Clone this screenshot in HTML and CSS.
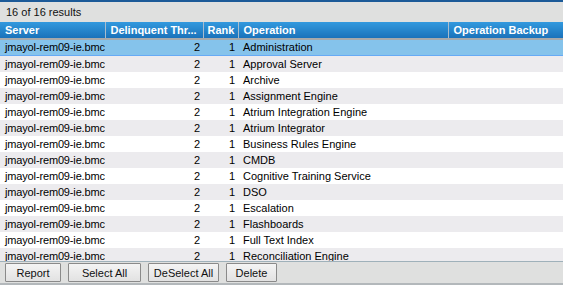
FILE: index.html
```
<!DOCTYPE html>
<html lang="en">
  <head>
    <meta charset="utf-8">
    <title>Results</title>
    <link rel="stylesheet" href="styles.css">
  </head>
  <body>
  <div id="panel">
    <div id="title">16 of 16 results</div>
    <div id="grid">
      <table>
        <colgroup>
          <col class="c-server"><col class="c-thr"><col class="c-rank"><col class="c-op"><col>
        </colgroup>
        <thead>
          <tr><th>Server</th><th title="Delinquent Threshold">Delinquent Thr...</th><th class="rank">Rank</th><th>Operation</th><th class="last">Operation Backup</th></tr>
        </thead>
        <tbody>
          <tr class="selected"><td>jmayol-rem09-ie.bmc</td><td class="num">2</td><td class="num">1</td><td>Administration</td><td></td></tr>
          <tr><td>jmayol-rem09-ie.bmc</td><td class="num">2</td><td class="num">1</td><td>Approval Server</td><td></td></tr>
          <tr><td>jmayol-rem09-ie.bmc</td><td class="num">2</td><td class="num">1</td><td>Archive</td><td></td></tr>
          <tr><td>jmayol-rem09-ie.bmc</td><td class="num">2</td><td class="num">1</td><td>Assignment Engine</td><td></td></tr>
          <tr><td>jmayol-rem09-ie.bmc</td><td class="num">2</td><td class="num">1</td><td>Atrium Integration Engine</td><td></td></tr>
          <tr><td>jmayol-rem09-ie.bmc</td><td class="num">2</td><td class="num">1</td><td>Atrium Integrator</td><td></td></tr>
          <tr><td>jmayol-rem09-ie.bmc</td><td class="num">2</td><td class="num">1</td><td>Business Rules Engine</td><td></td></tr>
          <tr><td>jmayol-rem09-ie.bmc</td><td class="num">2</td><td class="num">1</td><td>CMDB</td><td></td></tr>
          <tr><td>jmayol-rem09-ie.bmc</td><td class="num">2</td><td class="num">1</td><td>Cognitive Training Service</td><td></td></tr>
          <tr><td>jmayol-rem09-ie.bmc</td><td class="num">2</td><td class="num">1</td><td>DSO</td><td></td></tr>
          <tr><td>jmayol-rem09-ie.bmc</td><td class="num">2</td><td class="num">1</td><td>Escalation</td><td></td></tr>
          <tr><td>jmayol-rem09-ie.bmc</td><td class="num">2</td><td class="num">1</td><td>Flashboards</td><td></td></tr>
          <tr><td>jmayol-rem09-ie.bmc</td><td class="num">2</td><td class="num">1</td><td>Full Text Index</td><td></td></tr>
          <tr><td>jmayol-rem09-ie.bmc</td><td class="num">2</td><td class="num">1</td><td>Reconciliation Engine</td><td></td></tr>
        </tbody>
      </table>
    </div>
    <div id="footer">
      <button class="btn btn-report">Report</button>
      <button class="btn btn-select">Select All</button>
      <button class="btn btn-deselect">DeSelect All</button>
      <button class="btn btn-delete">Delete</button>
    </div>
  </div>
  </body>
</html>
```

FILE: styles.css
```
html, body {
  margin: 0;
  padding: 0;
  width: 100%;
  height: 100%;
  overflow: hidden;
  font-family: "Liberation Sans", Arial, sans-serif;
  font-size: 11px;
  color: #000;
}

#panel {
  width: 563px;
  height: 285px;
  display: flex;
  flex-direction: column;
  border-top: 2px solid #1c5a98;
  box-sizing: border-box;
  background: #fff;
}

#title {
  height: 20px;
  line-height: 20px;
  padding-left: 6px;
  background: #dfe0df;
  color: #111;
  flex: none;
}

#grid {
  flex: 1;
  overflow: hidden;
  background: #fff;
}

table {
  width: 100%;
  table-layout: fixed;
  border-collapse: collapse;
}

.c-server { width: 105px; }
.c-thr { width: 98px; }
.c-rank { width: 35px; }
.c-op { width: 210px; }

th {
  height: 16px;
  padding: 0 3px 0 5px;
  text-align: left;
  font-weight: bold;
  font-size: 11px;
  color: #fff;
  white-space: nowrap;
  overflow: hidden;
  background: linear-gradient(#3299de, #1a72ba);
  border-right: 1px solid #a9bccd;
  border-bottom: 2px solid #a7a9ab;
}

th.rank {
  padding: 0 0 0 4px;
}

th.last {
  border-right: none;
}

td {
  height: 16px;
  padding: 0 3px 0 5px;
  white-space: nowrap;
  overflow: hidden;
  line-height: 16px;
}

tbody td:first-child {
  padding-right: 0;
  letter-spacing: -0.15px;
}

td.num {
  text-align: right;
}

tbody tr:nth-child(even) td {
  background: #ecebee;
}

tbody tr.selected td {
  background: #85c3eb;
  height: 15px;
  line-height: 15px;
  border-bottom: 1px solid #66aaf5;
}

#footer {
  flex: none;
  height: 21px;
  display: flex;
  align-items: center;
  gap: 7px;
  padding: 0 5px;
  background: #dfe0df;
  border-top: 1px solid #9fb1ba;
  border-bottom: 2px solid #b3b8bb;
}

.btn {
  height: 19px;
  padding: 0;
  font-family: "Liberation Sans", Arial, sans-serif;
  font-size: 11px;
  color: #111;
  background: linear-gradient(#f4f4f4, #e2e2e2);
  border: 1px solid #8a8a8a;
  border-radius: 1px;
}

.btn-report { width: 56px; }
.btn-select { width: 73px; }
.btn-deselect { width: 71px; }
.btn-delete { width: 51px; }
```
